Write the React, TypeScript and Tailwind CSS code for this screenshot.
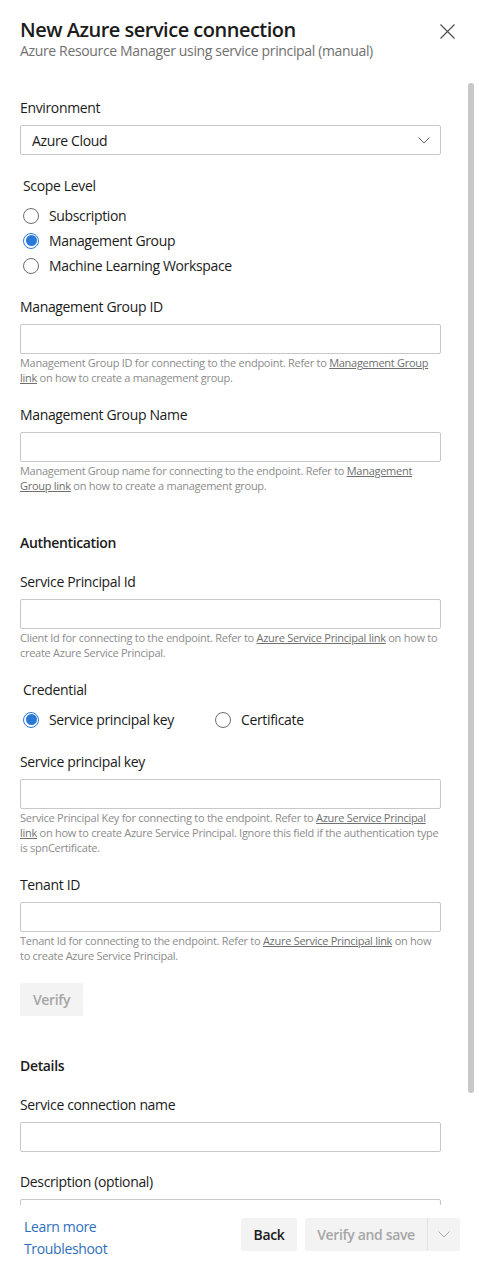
import React from 'react';

const FONT = "font-['Open_Sans','Noto_Sans',sans-serif]";

const Chevron = ({ color = '#5f5f5f' }: { color?: string }) => (
  <svg width="12" height="7" viewBox="0 0 12 7" fill="none">
    <polyline points="0.5,0.5 6,6 11.5,0.5" stroke={color} strokeWidth="1" />
  </svg>
);

const Label = ({ children, indent = false }: { children: React.ReactNode; indent?: boolean }) => (
  <div className={`text-[14px] leading-5 text-[#1b1b1b] ${indent ? 'pl-[3px]' : ''}`}>{children}</div>
);

const Input = () => (
  <input className="block w-full h-[30px] rounded-[2px] border border-[#c8c8c8] bg-white outline-none" />
);

const Help = ({ children }: { children: React.ReactNode }) => (
  <p className="mt-px text-[11px] leading-[15px] tracking-[-0.025em] text-[#8c8c8c]">{children}</p>
);

const A = ({ children }: { children: React.ReactNode }) => (
  <span className="underline text-[#6f6f6f]">{children}</span>
);

const Field = ({ label, help }: { label: string; help?: React.ReactNode }) => (
  <div className="pb-5">
    <div className="mb-[7px]">
      <Label>{label}</Label>
    </div>
    <Input />
    {help && <Help>{help}</Help>}
  </div>
);

const Radio = ({ checked, label, className = '' }: { checked?: boolean; label: string; className?: string }) => (
  <div className={`flex items-center h-[25px] pl-[3px] ${className}`}>
    {checked ? (
      <span className="w-4 h-4 rounded-full border border-[#2b79d6] flex items-center justify-center shrink-0">
        <span className="w-[11px] h-[11px] rounded-full bg-[#2b79d6]" />
      </span>
    ) : (
      <span className="w-4 h-4 rounded-full border border-[#6e6e6e] shrink-0" />
    )}
    <span className="ml-[10px] text-[14px] text-[#1b1b1b]">{label}</span>
  </div>
);

const Heading = ({ children }: { children: React.ReactNode }) => (
  <div className="pt-5 pb-[19px] text-[14px] leading-5 font-semibold text-[#1b1b1b]">{children}</div>
);

export default function App() {
  return (
    <div className={`${FONT} text-[14px] tracking-[-0.025em] w-[479px] h-[1263px] bg-white flex flex-col overflow-hidden`}>
      {/* header */}
      <div className="h-[80px] shrink-0 flex justify-between pl-5 pr-[17px] pt-4">
        <div className="pt-px">
          <h1 className="text-[20px] leading-[26px] tracking-[-0.025em] font-semibold text-[#1b1b1b]">New Azure service connection</h1>
          <p className="text-[14px] leading-4 text-[#707070]">Azure Resource Manager using service principal (manual)</p>
        </div>
        <button className="w-[30px] h-[30px] flex items-center justify-center">
          <svg width="15" height="15" viewBox="0 0 15 15" fill="none">
            <path d="M0.5 0.5 L14.5 14.5 M14.5 0.5 L0.5 14.5" stroke="#4a4a4a" strokeWidth="1.1" />
          </svg>
        </button>
      </div>

      {/* scrolling body */}
      <div className="flex-1 relative overflow-hidden">
        <div className="pl-5 pr-[38px] pt-[18px]">
          <div className="mb-[7px]">
            <Label>Environment</Label>
          </div>
          <div className="h-[30px] rounded-[2px] border border-[#c8c8c8] flex items-center justify-between pl-[11px] pr-[10px] mb-[21px]">
            <span className="text-[14px] text-[#1b1b1b]">Azure Cloud</span>
            <Chevron />
          </div>

          <div className="mb-[7px]">
            <Label indent>Scope Level</Label>
          </div>
          <div className="mb-[19px]">
            <Radio label="Subscription" />
            <Radio label="Management Group" checked />
            <Radio label="Machine Learning Workspace" />
          </div>

          <Field
            label="Management Group ID"
            help={<>Management Group ID for connecting to the endpoint. Refer to <A>Management Group link</A> on how to create a management group.</>}
          />
          <Field
            label="Management Group Name"
            help={<>Management Group name for connecting to the endpoint. Refer to <A>Management Group link</A> on how to create a management group.</>}
          />

          <Heading>Authentication</Heading>

          <Field
            label="Service Principal Id"
            help={<>Client Id for connecting to the endpoint. Refer to <A>Azure Service Principal link</A> on how to create Azure Service Principal.</>}
          />

          <div className="mb-[7px]">
            <Label indent>Credential</Label>
          </div>
          <div className="flex mb-5">
            <Radio label="Service principal key" checked className="w-[192px]" />
            <Radio label="Certificate" />
          </div>

          <Field
            label="Service principal key"
            help={<>Service Principal Key for connecting to the endpoint. Refer to <A>Azure Service Principal link</A> on how to create Azure Service Principal. Ignore this field if the authentication type is spnCertificate.</>}
          />
          <Field
            label="Tenant ID"
            help={<>Tenant Id for connecting to the endpoint. Refer to <A>Azure Service Principal link</A> on how to create Azure Service Principal.</>}
          />

          <div className="pb-5">
            <button className="block h-[33px] w-[63px] rounded-[2px] bg-[#f3f3f3] text-[14px] font-semibold text-[#a6a6a6]">Verify</button>
          </div>

          <Heading>Details</Heading>

          <Field label="Service connection name" />
          <Field label="Description (optional)" />
        </div>
        <div className="absolute right-[5px] top-[3px] w-[6px] h-[1010px] rounded-full bg-[#c8c8c8]" />
      </div>

      {/* footer */}
      <div className="h-[58px] shrink-0 flex justify-between items-start pl-6 pr-[19px] pt-[11px]">
        <div className="flex flex-col text-[14px] leading-[22px] text-[#2f6fba]">
          <span>Learn more</span>
          <span>Troubleshoot</span>
        </div>
        <div className="flex gap-2 mt-[2px]">
          <button className="h-[33px] w-[56px] rounded-[2px] bg-[#f3f3f3] text-[14px] font-semibold text-[#1b1b1b]">Back</button>
          <div className="flex h-[33px] rounded-[2px] bg-[#f3f3f3]">
            <button className="w-[122px] text-[14px] font-semibold text-[#a6a6a6]">Verify and save</button>
            <div className="w-px bg-[#e2e2e2]" />
            <button className="w-[32px] flex items-center justify-center">
              <Chevron color="#a6a6a6" />
            </button>
          </div>
        </div>
      </div>
    </div>
  );
}
